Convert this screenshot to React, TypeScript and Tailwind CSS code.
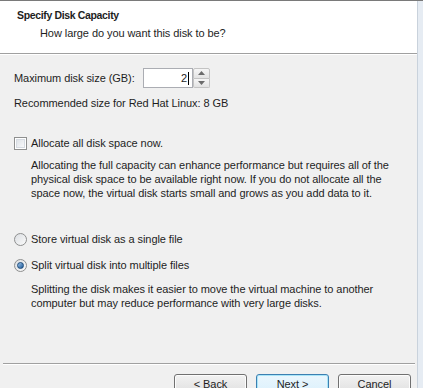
import React from "react";

const font = { fontFamily: '"Liberation Sans", Arial, sans-serif' };

function Checkbox() {
  return (
    <span className="flex h-[13px] w-[13px] shrink-0 items-center justify-center border border-[#8e8f8f] bg-white">
      <span className="h-[9px] w-[9px] border border-[#d6dbe2] bg-gradient-to-br from-[#dfe3e8] to-[#f8f9fa]" />
    </span>
  );
}

function Radio({ checked }: { checked?: boolean }) {
  return (
    <span className="flex h-[13px] w-[13px] shrink-0 items-center justify-center rounded-full border border-[#8e8f8f] bg-gradient-to-br from-[#dcdfe3] to-[#fafafa]">
      {checked && (
        <span className="h-[7px] w-[7px] rounded-full border border-[#1c4b7a] bg-gradient-to-br from-[#9cc4ea] to-[#1a5a97]" />
      )}
    </span>
  );
}

function WinButton({ label, primary }: { label: string; primary?: boolean }) {
  return (
    <button
      type="button"
      className={
        "flex h-[23px] w-[73px] shrink-0 items-start justify-center rounded-[3px] border pt-[2px] text-[11px] leading-[14px] text-[#1e1e1e] " +
        (primary
          ? "border-[#3c7fb1] bg-gradient-to-b from-[#eaf6fd] to-[#d9f0fc] shadow-[inset_0_0_0_1px_#a9e5f8]"
          : "border-[#707070] bg-gradient-to-b from-[#f2f2f2] to-[#dddddd] shadow-[inset_0_0_0_1px_#fcfcfc]")
      }
      style={font}
    >
      {label}
    </button>
  );
}

export default function App() {
  return (
    <div
      className="flex h-[388px] w-[423px] overflow-hidden bg-[#f0f0f0] text-[11px] leading-[14px] tracking-[-0.07px] text-[#1e1e1e]"
      style={font}
    >
      <div className="flex w-[417px] shrink-0 flex-col">
        {/* Header */}
        <div className="h-[1px] shrink-0 bg-[#7a7a7a]" />
        <div className="h-[52px] shrink-0 bg-white pl-[17px] pt-[7px]">
          <div className="text-[10.5px] font-bold leading-[14px] tracking-[-0.35px]">Specify Disk Capacity</div>
          <div className="pl-[23px] pt-[4px]">How large do you want this disk to be?</div>
        </div>
        <div className="h-[1px] shrink-0 bg-[#a0a0a0]" />
        <div className="h-[1px] shrink-0 bg-white" />

        {/* Body */}
        <div className="flex h-[308px] shrink-0 flex-col px-[14px] pt-[13px]">
          <div className="flex h-[20px] items-center">
            <span className="w-[129px]">Maximum disk size (GB):</span>
            <div className="flex h-[20px] w-[50px] items-center justify-end border border-[#abadb3] bg-white pr-[3px]">
              <span>2</span>
              <span className="ml-[1px] h-[13px] w-px bg-black" />
            </div>
            <div className="flex h-[20px] w-[17px] flex-col">
              <div className="flex flex-1 items-center justify-center rounded-t-[2px] border border-[#c3c3c3] bg-gradient-to-b from-[#f6f6f6] to-[#e3e3e3]">
                <svg width="7" height="4" viewBox="0 0 7 4"><path d="M0 4 L3.5 0 L7 4 Z" fill="#6b6b6b" /></svg>
              </div>
              <div className="flex flex-1 items-center justify-center rounded-b-[2px] border border-t-0 border-[#c3c3c3] bg-gradient-to-b from-[#f6f6f6] to-[#e3e3e3]">
                <svg width="7" height="4" viewBox="0 0 7 4"><path d="M0 0 L3.5 4 L7 0 Z" fill="#6b6b6b" /></svg>
              </div>
            </div>
          </div>
          <div className="mt-[8px]">Recommended size for Red Hat Linux: 8 GB</div>

          <div className="mt-[26px] flex items-center gap-[4px]">
            <Checkbox />
            <span>Allocate all disk space now.</span>
          </div>
          <div className="mt-[8px] pl-[17px]">
            <div>Allocating the full capacity can enhance performance but requires all of the</div>
            <div>physical disk space to be available right now. If you do not allocate all the</div>
            <div>space now, the virtual disk starts small and grows as you add data to it.</div>
          </div>

          <div className="mt-[32px] flex items-center gap-[4px]">
            <Radio />
            <span>Store virtual disk as a single file</span>
          </div>
          <div className="mt-[12px] flex items-center gap-[4px]">
            <Radio checked />
            <span>Split virtual disk into multiple files</span>
          </div>
          <div className="mt-[10px] pl-[17px]">
            <div>Splitting the disk makes it easier to move the virtual machine to another</div>
            <div>computer but may reduce performance with very large disks.</div>
          </div>
        </div>

        {/* Footer */}
        <div className="ml-[3px] mr-[2px] h-[1px] shrink-0 bg-[#a0a0a0]" />
        <div className="ml-[3px] mr-[2px] h-[1px] shrink-0 bg-white" />
        <div className="flex shrink-0 justify-end gap-[9px] pr-[6px] pt-[9px]">
          <WinButton label="< Back" />
          <WinButton label="Next >" primary />
          <WinButton label="Cancel" />
        </div>
      </div>
      <div className="flex w-[6px] flex-col">
        <div className="h-[1px] bg-[#7a7a7a]" />
        <div className="flex flex-1">
          <div className="w-px bg-[#c9d2dc]" />
          <div className="flex-1 bg-[#e6ecf3]" />
        </div>
      </div>
    </div>
  );
}
